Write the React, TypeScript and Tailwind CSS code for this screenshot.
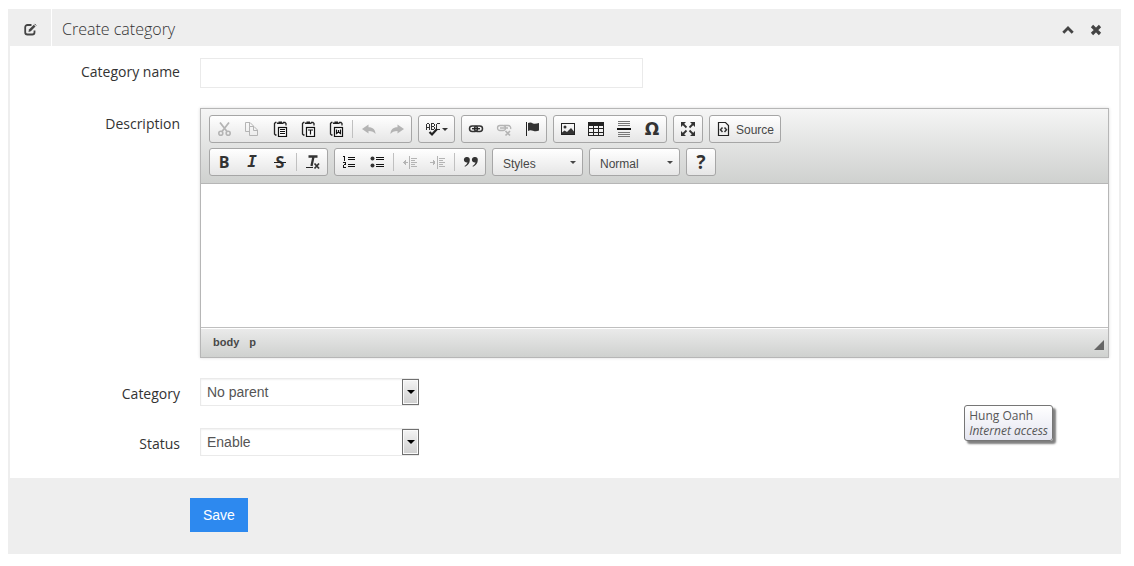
import type { ReactNode } from 'react';

function Icon({ children, w = 16 }: { children: ReactNode; w?: number }) {
  return (
    <svg width={w} height="16" viewBox={`0 0 ${w} 16`} fill="none" stroke="currentColor" aria-hidden="true" className="block shrink-0">
      {children}
    </svg>
  );
}

function Tool({ label, disabled = false, children }: { label: string; disabled?: boolean; children: ReactNode }) {
  return (
    <button
      type="button"
      aria-label={label}
      disabled={disabled}
      className="flex h-[26px] items-center justify-center px-1.5 text-[#333] disabled:text-[#b4b4b4]"
    >
      {children}
    </button>
  );
}

function Group({ children }: { children: ReactNode }) {
  return (
    <div className="flex h-7 items-center rounded-[3px] border border-[#a6a6a6] bg-linear-to-b from-white to-[#e6e6e6]">
      {children}
    </div>
  );
}

function Separator() {
  return <span className="mx-0.5 h-[18px] w-px bg-[#c0c0c0]" />;
}

function Clipboard({ children }: { children: ReactNode }) {
  return (
    <Icon>
      <path d="M4.500 1.500H3.500L2.500 2.500V13L3.500 14H4.500M11 1.500H13L14 2.500V4.500" stroke="#222" strokeWidth="1.300" />
      <path d="M5 3V1.500H6.500V0.500H10V1.500H11.500V3Z" fill="#222" stroke="none" />
      <rect x="6.500" y="6.500" width="8" height="9" fill="#fff" stroke="#111" strokeWidth="1.200" />
      {children}
    </Icon>
  );
}

function Indent({ flip = false }: { flip?: boolean }) {
  return (
    <Icon>
      <g shapeRendering="crispEdges">
        <path d="M7.500 2V15M9 4.500H15M9 6.500H13M9 8.500H15M9 10.500H13M9 12.500H15" />
        <path d={flip ? 'M0 8.500H5M3.500 6V11M4.500 7V10' : 'M1 8.500H6M2.500 7V10M3.500 6V11'} />
      </g>
    </Icon>
  );
}

function StyleMenu({ label, value }: { label: string; value: string }) {
  return (
    <button
      type="button"
      aria-label={label}
      className="flex h-7 w-[91px] items-center justify-between rounded-[3px] border border-[#a6a6a6] bg-linear-to-b from-white to-[#e6e6e6] pr-1.5 pl-2.5 text-[12px] text-[#474747]"
    >
      <span className="pt-1">{value}</span>
      <span className="border-x-3 border-t-3 border-x-transparent border-t-[#474747]" />
    </button>
  );
}

function Toolbar() {
  return (
    <div className="flex flex-col gap-[5px] border-b border-[#b6b6b6] bg-linear-to-b from-[#f5f5f5] to-[#cfd1cf] px-2 pt-1.5 pb-[7px]">
      <div className="flex flex-wrap gap-x-1.5 gap-y-[5px]">
        <Group>
          <Tool label="Cut" disabled>
            <Icon>
              <path d="M4 1.500L11 10.500M13 1.500L6 10.500" strokeWidth="1.800" />
              <circle cx="4.800" cy="12.300" r="2" strokeWidth="1.600" />
              <circle cx="12.200" cy="12.300" r="2" strokeWidth="1.600" />
            </Icon>
          </Tool>
          <Tool label="Copy" disabled>
            <Icon>
              <path d="M5.500 10.500H1.500V1.500H6L9.500 5V5.500M5.500 1.500V5.500H9" />
              <path d="M5.500 5.500H10L13.500 9V14.500H5.500ZM9.500 5.500V9.500H13.500" />
            </Icon>
          </Tool>
          <Tool label="Paste">
            <Clipboard>
              <path d="M8 8.500H13M8 10.500H13M8 12.500H13" stroke="#111" shapeRendering="crispEdges" />
            </Clipboard>
          </Tool>
          <Tool label="Paste as plain text">
            <Clipboard>
              <path d="M8 9H13M10.500 9V13.500" stroke="#111" strokeWidth="1.200" />
            </Clipboard>
          </Tool>
          <Tool label="Paste from Word">
            <Clipboard>
              <path d="M8.500 8.500V12.500L10.500 11L12.500 12.500V8.500M10.500 9V11.500" stroke="#111" strokeWidth="1.200" />
            </Clipboard>
          </Tool>
          <Separator />
          <Tool label="Undo" disabled>
            <Icon>
              <path d="M1 8L7.500 3.500V6.300C12 6.300 14.500 9 14.500 13C13 10.700 11 9.900 7.500 9.900V12.500Z" fill="currentColor" stroke="none" />
            </Icon>
          </Tool>
          <Tool label="Redo" disabled>
            <Icon>
              <path d="M15 8L8.500 3.500V6.300C4 6.300 1.500 9 1.500 13C3 10.700 5 9.900 8.500 9.900V12.500Z" fill="currentColor" stroke="none" />
            </Icon>
          </Tool>
        </Group>
        <Group>
          <Tool label="Spell check as you type">
            <Icon>
              <g stroke="#333" shapeRendering="crispEdges">
                <path d="M1.500 9V3.500L2.500 2.500H3.500L4.500 3.500V9M2 6.500H4" />
                <path d="M6.500 2V9M7 2.500H9M7 5.500H9M7 8.500H9M9.500 3V5M9.500 6V8" />
                <path d="M15 2.500H12.500L11.500 3.500V7.500L12.500 8.500H15" />
              </g>
              <path d="M4.500 11L7 13.500L12 8" stroke="#222" strokeWidth="2.200" />
            </Icon>
            <span className="ml-px border-x-3 border-t-3 border-x-transparent border-t-[#333]" />
          </Tool>
        </Group>
        <Group>
          <Tool label="Link">
            <Icon>
              <rect x="1.500" y="5" width="8" height="5.500" rx="2.700" strokeWidth="1.500" />
              <rect x="6.500" y="5" width="8" height="5.500" rx="2.700" strokeWidth="1.500" />
              <path d="M4 7.700H12" stroke="#222" strokeWidth="1.300" />
            </Icon>
          </Tool>
          <Tool label="Unlink" disabled>
            <Icon>
              <rect x="1.500" y="4.500" width="8" height="5" rx="2.500" strokeWidth="1.300" />
              <path d="M8 4.500H12A2.500 2.500 0 0 1 14.500 8M4 7H12" strokeWidth="1.300" />
              <path d="M9.500 10L14 14.500M14 10L9.500 14.500" strokeWidth="1.700" />
            </Icon>
          </Tool>
          <Tool label="Anchor">
            <Icon>
              <path d="M2.500 1V15" stroke="#222" />
              <path d="M4 2C6 1 7.500 1.500 9 2.500C11 3.300 13 2.500 15 2V9.500C13 10.500 11 10.500 9 9.700C7 8.800 5.500 9 4 10Z" fill="currentColor" stroke="none" />
            </Icon>
          </Tool>
        </Group>
        <Group>
          <Tool label="Image">
            <Icon>
              <rect x="1.500" y="2.500" width="13" height="11" stroke="#222" />
              <circle cx="5" cy="6" r="1.500" fill="currentColor" stroke="none" />
              <path d="M2 13V11.500L4.500 9.500L7 11L11 7L14 10.500V13Z" fill="currentColor" stroke="none" />
            </Icon>
          </Tool>
          <Tool label="Table">
            <Icon>
              <g stroke="#222" shapeRendering="crispEdges">
                <rect x="0.500" y="1.500" width="15" height="13" />
                <path d="M1 3H15" strokeWidth="3" />
                <path d="M1 7.500H15M1 11.500H15M5.500 4V14M10.500 4V14" />
              </g>
            </Icon>
          </Tool>
          <Tool label="Horizontal line">
            <Icon>
              <g shapeRendering="crispEdges">
                <path d="M2 0.500H14M2 2.500H14M2 4.500H14M2 11.500H14M2 13.500H14M2 15.500H14" stroke="#777" />
                <path d="M1 8H15" stroke="#111" strokeWidth="2" />
              </g>
            </Icon>
          </Tool>
          <Tool label="Special character">
            <span className="w-4 text-center font-['DejaVu_Sans'] text-[17px] leading-4 font-bold">Ω</span>
          </Tool>
        </Group>
        <Group>
          <Tool label="Maximize">
            <Icon>
              <path d="M3 3L6.500 6.500M13 3L9.500 6.500M3 13L6.500 9.500M13 13L9.500 9.500" strokeWidth="1.800" />
              <path d="M1 1H6L1 6ZM15 1V6L10 1ZM1 15V10L6 15ZM15 15H10L15 10Z" fill="currentColor" stroke="none" />
            </Icon>
          </Tool>
        </Group>
        <Group>
          <Tool label="Source">
            <Icon>
              <path d="M2.500 1.500H9.500L12.500 4.500V14.500H2.500Z" stroke="#222" strokeWidth="1.200" />
              <path d="M6.500 6.500L4.500 8.800L6.500 11M8.500 6.500L10.500 8.800L8.500 11" strokeWidth="1.500" />
            </Icon>
            <span className="pt-0.5 pl-1 font-['Liberation_Sans',sans-serif] text-[12px] text-[#474747]">Source</span>
          </Tool>
        </Group>
      </div>
      <div className="flex flex-wrap gap-x-1.5 gap-y-[5px]">
        <Group>
          <Tool label="Bold">
            <span className="w-4 text-center font-['Open_Sans'] text-[16px] leading-4 font-bold">B</span>
          </Tool>
          <Tool label="Italic">
            <span className="w-4 text-center font-['DejaVu_Sans_Mono'] text-[16px] leading-4 font-bold italic">I</span>
          </Tool>
          <Tool label="Strikethrough">
            <span className="relative w-4 text-center font-['Open_Sans'] text-[16px] leading-4 font-bold after:absolute after:inset-x-0.5 after:top-2 after:h-px after:bg-[#222]">
              S
            </span>
          </Tool>
          <Separator />
          <Tool label="Remove format">
            <Icon>
              <path d="M3.500 2.500H12.500M8.500 2.500L6.500 12" strokeWidth="2.300" />
              <path d="M1 13.500H8" stroke="#222" />
              <path d="M9.500 9.500L14 14.500M14 9.500L9.500 14.500" strokeWidth="1.700" />
            </Icon>
          </Tool>
        </Group>
        <Group>
          <Tool label="Numbered list">
            <Icon>
              <g stroke="#111" shapeRendering="crispEdges">
                <path d="M7 3.500H14M7 5.500H14M7 10.500H14M7 12.500H14" />
                <path d="M2 2.500H4M3.500 2V7M2 8.500H5M4.500 9V11M3 10.500H5M2.500 11V13M2 13.500H5" />
              </g>
            </Icon>
          </Tool>
          <Tool label="Bulleted list">
            <Icon>
              <g fill="currentColor" stroke="none">
                <circle cx="3.500" cy="4.500" r="2" />
                <circle cx="3.500" cy="11.500" r="2" />
              </g>
              <path d="M7 3.500H15M7 5.500H15M7 10.500H15M7 12.500H15" stroke="#111" shapeRendering="crispEdges" />
            </Icon>
          </Tool>
          <Separator />
          <Tool label="Decrease indent" disabled>
            <Indent />
          </Tool>
          <Tool label="Increase indent" disabled>
            <Indent flip />
          </Tool>
          <Separator />
          <Tool label="Block quote">
            <Icon>
              <g fill="currentColor" stroke="none">
                <path d="M4 3A2.700 2.700 0 0 1 6.800 6C6.800 9 5 11.500 2 12.800L1.500 12C3.300 11 4.300 9.700 4.500 8.200A2.700 2.700 0 1 1 4 3Z" />
                <path d="M12 3A2.700 2.700 0 0 1 14.800 6C14.800 9 13 11.500 10 12.800L9.500 12C11.300 11 12.300 9.700 12.500 8.200A2.700 2.700 0 1 1 12 3Z" />
              </g>
            </Icon>
          </Tool>
        </Group>
        <StyleMenu label="Formatting styles" value="Styles" />
        <StyleMenu label="Paragraph format" value="Normal" />
        <Group>
          <Tool label="About">
            <span className="w-4 text-center font-['Open_Sans'] text-[19px] leading-4 font-bold">?</span>
          </Tool>
        </Group>
      </div>
    </div>
  );
}

function Editor() {
  return (
    <div className="border border-[#b6b6b6] font-['Liberation_Sans',sans-serif] shadow-[0_0_3px_rgba(0,0,0,0.15)]">
      <Toolbar />
      <textarea id="description" className="block h-[143px] w-full resize-none bg-white p-5 text-[13px] outline-none" />
      <div className="flex h-[30px] items-center justify-between border-t border-[#bfbfbf] bg-linear-to-b from-[#ebebeb] to-[#cfd1cf] pr-1 pl-3 text-[11px] font-bold text-[#484848] shadow-[inset_0_1px_0_#fff]">
        <div className="flex gap-2.5">
          <a href="#body">body</a>
          <a href="#p">p</a>
        </div>
        <svg width="10" height="10" viewBox="0 0 10 10" aria-hidden="true" className="mt-1">
          <path d="M10 0V10H0Z" fill="#666" />
        </svg>
      </div>
    </div>
  );
}

function SelectField({ id, options }: { id: string; options: string[] }) {
  return (
    <div className="relative h-[30px] w-[219px]">
      <select
        id={id}
        className="block h-7 w-full appearance-none border border-[#eaeaea] bg-white pl-1.5 font-['Liberation_Sans',sans-serif] text-[14px] text-[#555] shadow-[inset_0_1px_2px_rgba(0,0,0,0.06)]"
      >
        {options.map((option) => (
          <option key={option}>{option}</option>
        ))}
      </select>
      <span className="pointer-events-none absolute top-px right-0 flex h-[26px] w-[17px] items-center justify-center border border-[#707070] bg-linear-to-b from-[#f4f4f4] to-[#cfcfcf] shadow-[inset_0_0_0_1px_#fafafa]">
        <span className="border-x-4 border-t-4 border-x-transparent border-t-black" />
      </span>
    </div>
  );
}

function Label({ htmlFor, children }: { htmlFor: string; children: ReactNode }) {
  return (
    <label htmlFor={htmlFor} className="pt-1.5 text-right text-[14px] leading-5 text-[#333] first:pt-1">
      {children}
    </label>
  );
}

export default function App() {
  return (
    <main className="bg-white pt-[9px] pr-[13px] pb-3 pl-2 font-['Open_Sans',sans-serif]">
      <form className="bg-[#eee]">
        <header className="flex h-[37px] items-center">
          <span className="flex h-full w-11 items-center justify-center border-r border-white pt-1 pl-0.5 text-[#444]">
            <svg width="13" height="13" viewBox="0 0 13 13" fill="none" stroke="currentColor" aria-hidden="true">
              <path d="M7.500 2H3.500A2.300 2.300 0 0 0 1.200 4.300V9.200A2.300 2.300 0 0 0 3.500 11.500H8.200A2.300 2.300 0 0 0 10.500 9.200V7.500" strokeWidth="1.800" />
              <path d="M4.500 9L5 6.500L9.800 1.700L11.500 3.400L6.800 8.300Z" fill="currentColor" stroke="none" />
              <path d="M10.600 0.900L12.200 2.500" strokeWidth="1" />
            </svg>
          </span>
          <h1 className="flex-1 pt-0.5 pl-2.5 text-[16px] leading-6 font-light text-[#333]">Create category</h1>
          <div className="flex items-center gap-4 pt-1 pr-[19px] text-[#444]">
            <button type="button" aria-label="Collapse">
              <svg width="12" height="12" viewBox="0 0 12 12" fill="none" stroke="currentColor" className="block">
                <path d="M1.300 8.700L6 4L10.700 8.700" strokeWidth="2.800" />
              </svg>
            </button>
            <button type="button" aria-label="Close">
              <svg width="12" height="12" viewBox="0 0 12 12" fill="none" stroke="currentColor" className="block">
                <path d="M2 2L10 10M10 2L2 10" strokeWidth="3.200" />
              </svg>
            </button>
          </div>
        </header>

        <div className="relative mx-0.5 grid grid-cols-[170px_1fr] gap-5 bg-white pt-3 pr-2.5 pb-5">
          <Label htmlFor="name">Category name</Label>
          <input id="name" type="text" className="h-[30px] w-full max-w-[443px] border border-[#eaeaea] bg-white px-1.5 text-[14px] outline-none" />
          <Label htmlFor="description">Description</Label>
          <Editor />
          <Label htmlFor="category">Category</Label>
          <SelectField id="category" options={['No parent']} />
          <Label htmlFor="status">Status</Label>
          <SelectField id="status" options={['Enable', 'Disable']} />
          <div
            role="tooltip"
            className="absolute right-[66px] bottom-[37px] rounded-[3px] border border-[#767676] bg-linear-to-b from-white to-[#e4e5f0] px-1 py-0.5 text-[12px] leading-[15px] whitespace-nowrap text-[#575757] shadow-[3px_3px_2px_rgba(0,0,0,0.5)]"
          >
            <p>Hung Oanh</p>
            <p className="italic">Internet access</p>
          </div>
        </div>

        <footer className="pt-5 pb-[22px] pl-[182px]">
          <button type="submit" className="block h-[34px] bg-[#2d89ef] px-[13px] font-['Liberation_Sans',sans-serif] text-[14px] text-white">
            Save
          </button>
        </footer>
      </form>
    </main>
  );
}
